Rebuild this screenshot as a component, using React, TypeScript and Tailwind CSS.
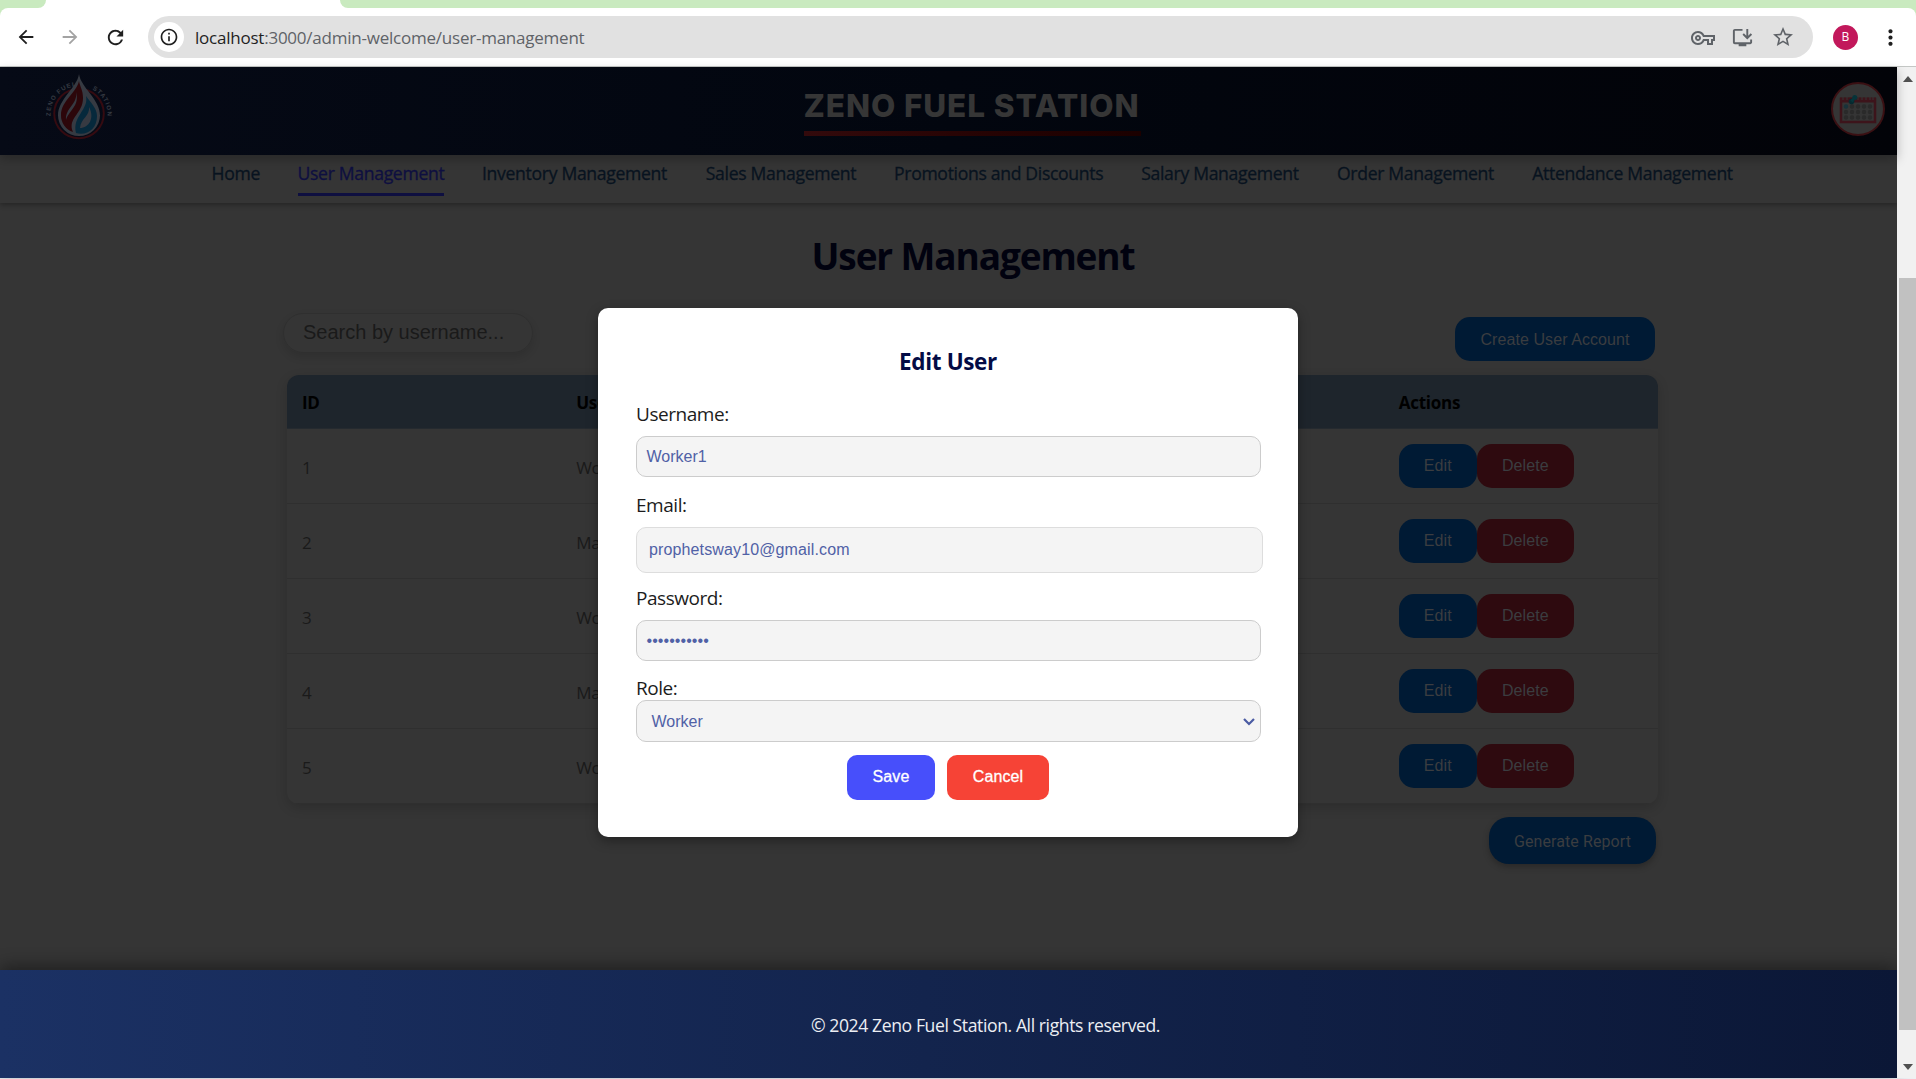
import type { ReactNode } from "react";
import {
  MdArrowBack,
  MdArrowForward,
  MdInfoOutline,
  MdInstallDesktop,
  MdMoreVert,
  MdOutlineVpnKey,
  MdRefresh,
  MdStarOutline,
} from "react-icons/md";

const navItems = [
  { label: "Home", width: "w-[48.5px]" },
  { label: "User Management", width: "w-[146px]", active: true },
  { label: "Inventory Management", width: "w-[187px]" },
  { label: "Sales Management", width: "w-[151px]" },
  { label: "Promotions and Discounts", width: "w-[209px]" },
  { label: "Salary Management", width: "w-[159px]" },
  { label: "Order Management", width: "w-[157px]" },
  { label: "Attendance Management", width: "w-[202px]" },
];

const users = [
  { id: 1, name: "Worker1" },
  { id: 2, name: "Manager1" },
  { id: 3, name: "Worker2" },
  { id: 4, name: "Manager2" },
  { id: 5, name: "Worker3" },
];

function BrowserBar() {
  return (
    <div className="h-[67px] shrink-0 bg-[#c9eabf]">
      <div className="flex h-2 bg-white">
        <div className="w-[46px] rounded-br-[12px] bg-[#c9eabf]" />
        <div className="flex-1" />
        <div className="w-[1576px] rounded-bl-[12px] bg-[#c9eabf]" />
      </div>
      <div className="flex h-[59px] items-start rounded-t-lg border-b border-[#c4c7c5] bg-white pt-2">
        <div className="flex h-[42px] w-[148px] items-center pl-[15px] text-[#1f1f1f]">
          <MdArrowBack className="size-[22px]" />
          <MdArrowForward className="ml-[22px] size-[22px] text-[#a3a3a3]" />
          <MdRefresh className="ml-[23px] size-[23px]" />
        </div>
        <div className="flex h-[42px] flex-1 items-center rounded-full bg-[#e1e1e1] pl-1.5 pr-[18px]">
          <div className="flex size-[30px] items-center justify-center rounded-full bg-white">
            <MdInfoOutline className="size-[20px] text-[#1f1f1f]" />
          </div>
          <div className="ml-[11px] flex-1 whitespace-nowrap pt-[1px] text-[17px] tracking-[-0.23px] text-[#5f6368]">
            <span className="text-[#1f1f1f]">localhost</span>:3000/admin-welcome/user-management
          </div>
          <div className="flex items-center gap-[17px] text-[#5f6368]">
            <MdOutlineVpnKey className="-mr-px mt-[1px] size-6" />
            <MdInstallDesktop className="size-[23px]" />
            <MdStarOutline className="size-[24px]" />
          </div>
        </div>
        <div className="flex h-[42px] w-[103px] items-center pl-5">
          <div className="flex size-[25px] items-center justify-center rounded-full bg-[#c2185b] text-[12px] text-white">
            B
          </div>
          <MdMoreVert className="ml-[20px] size-[25px] text-[#1f1f1f]" />
        </div>
      </div>
    </div>
  );
}

function FuelLogo() {
  return (
    <svg viewBox="0 0 72 72" className="size-[72px]">
      <defs>
        <path id="ring" d="M 8.5 50 A 28.5 28.5 0 1 1 63.5 50" />
      </defs>
      <circle cx="36" cy="41.5" r="24.8" fill="none" stroke="#350b11" strokeWidth="2" />
      <path d="M36 2C34 16 15 27 15 43.500a21 20.500 0 0 0 42 0C57 27 38 16 36 2Z" fill="#363a42" />
      <path d="M36 9C34 20 18 29 18 43a18 17.500 0 0 0 12 17c-6-14 10-18 10-34 0-8-3-11-4-17Z" fill="#2c060a" />
      <path d="M33 20c2 12-11 16-10 28 3-10 14-14 10-28Z" fill="#363a42" />
      <path d="M43 24c3 14-14 20-10 37 11 3 21-4 21-17 0-8-7-14-11-20Z" fill="#06293c" />
      <path d="M46 35c1 9-8 11-9 21 9 0 15-10 9-21Z" fill="#363a42" />
      <text fontSize="6.2" fill="#363a42" fontFamily="Liberation Sans" fontWeight="700" letterSpacing="1">
        <textPath href="#ring" startOffset="6">
          ZENO FUEL
        </textPath>
        <textPath href="#ring" startOffset="66">
          STATION
        </textPath>
      </text>
    </svg>
  );
}

function CalendarLogo() {
  return (
    <svg viewBox="0 0 54 54" className="size-[54px]">
      <circle cx="27" cy="27" r="26" fill="#353535" stroke="#3a1013" strokeWidth="2" />
      <rect x="10" y="17" width="34" height="23" fill="#353535" stroke="#3d141b" strokeWidth="2.500" />
      <rect x="9" y="15.500" width="36" height="5" fill="#3d141b" />
      <path d="M12 15v3M16 15v3M27 15v3M31 15v3M35 15v3M39 15v3M42 15v3" stroke="#353535" strokeWidth="1" />
      {[24.5, 30, 35.5].map((cy) =>
        [15, 21, 27, 33, 39].map((cx) => (
          <circle key={`${cx}-${cy}`} cx={cx} cy={cy} r="2.200" fill={cx === 15 && cy === 24.5 ? "#18323a" : "#2a2a2a"} />
        )),
      )}
      <circle cx="20.500" cy="19.500" r="2.800" fill="#062a30" />
      <circle cx="23.800" cy="15.500" r="2.500" fill="#06343a" />
      <path d="M20.500 19.500l3.300-4" stroke="#06343a" strokeWidth="3" />
    </svg>
  );
}

function SiteHeader() {
  return (
    <header className="relative z-10 flex h-[88px] shrink-0 items-start justify-between bg-linear-to-r from-[#060a16] via-[#02060f] to-[#020308] shadow-[0_4px_10px_rgba(0,0,0,0.25)]">
      <div className="ml-[43px] mt-[5px]">
        <FuelLogo />
      </div>
      <h1 className="ml-[-2px] mt-[18px] h-[50px] w-[337px] whitespace-nowrap font-['Inter'] text-[31.5px] font-extrabold leading-[41px] tracking-[0.9px] text-[#363636]">
        ZENO FUEL STATION
        <span className="mt-[5px] block h-[5px] bg-linear-to-r from-[#330a0c] to-[#1b0000]" />
      </h1>
      <div className="mr-3 mt-[15px]">
        <CalendarLogo />
      </div>
    </header>
  );
}

function NavBar() {
  return (
    <nav className="flex h-12 shrink-0 justify-center gap-[37.5px] pl-[48px] shadow-[0_2px_5px_rgba(0,0,0,0.3)]">
      {navItems.map((item) => (
        <a
          key={item.label}
          className={`${item.width} h-[41px] shrink-0 whitespace-nowrap pt-[6px] text-center text-[17.6px] font-medium leading-[24px] tracking-[-0.32px] [-webkit-text-stroke:0.3px_currentColor] ${
            item.active ? "border-b-[3px] border-[#0e0f40] text-[#0e0f40]" : "text-[#08131f]"
          }`}
        >
          {item.label}
        </a>
      ))}
    </nav>
  );
}

function DarkButton({ children, className }: { children: ReactNode; className: string }) {
  return (
    <button
      className={`flex h-11 items-center justify-center whitespace-nowrap rounded-[15px] pt-[1px] font-['Liberation_Sans'] text-[16px] tracking-[0.08px] text-[#3b3d40] ${className}`}
    >
      {children}
    </button>
  );
}

function UserTable() {
  return (
    <div className="h-[429px] w-[1371px] overflow-hidden rounded-[12px] shadow-[0_4px_12px_rgba(0,0,0,0.16)]">
      <div className="grid h-[54px] grid-cols-5 border-b border-[#252a2f] bg-[#1e252c] pt-[2px] text-[17px] font-bold leading-[52px] tracking-[-0.27px] text-black">
        {["ID", "Username", "", "", "Actions"].map((title, index) => (
          <div key={index} className="pl-[15px]">
            {title}
          </div>
        ))}
      </div>
      {users.map((user) => (
        <div
          key={user.id}
          className="grid h-[75px] grid-cols-5 items-center border-b border-[#2f2f2f] text-[17px] tracking-[-0.3px] text-[#1a1a1a]"
        >
          <div className="pl-[15px] pt-[3px]">{user.id}</div>
          <div className="pl-[15px] pt-[3px]">{user.name}</div>
          <div />
          <div />
          <div className="flex pb-[1px] pl-[15px]">
            <DarkButton className="w-[78px] bg-[#001a34]">Edit</DarkButton>
            <DarkButton className="w-[97px] bg-[#2e0a0f]">Delete</DarkButton>
          </div>
        </div>
      ))}
    </div>
  );
}

function FormLabel({ children, className }: { children: ReactNode; className: string }) {
  return (
    <div className={`flex items-center text-[19px] tracking-[-0.45px] text-[#1c1c1c] ${className}`}>{children}</div>
  );
}

function Field({ children, className }: { children: ReactNode; className: string }) {
  return (
    <div
      className={`flex items-center rounded-[10px] border bg-[#f4f4f4] font-['Liberation_Sans'] text-[16px] text-[#5061a6] ${className}`}
    >
      {children}
    </div>
  );
}

function EditUserDialog() {
  return (
    <div className="absolute left-[598px] top-[308px] z-20 h-[529px] w-[700px] rounded-[10px] bg-white pl-[38px] pr-[37px] pt-[39px] shadow-[0_4px_12px_rgba(0,0,0,0.35)]">
      <h3 className="h-[30px] pr-[1px] text-center text-[22.5px] font-bold leading-[30px] tracking-[-0.35px] text-[#030b45]">
        Edit User
      </h3>
      <FormLabel className="mt-[23px] h-[26px] pt-[2px]">Username:</FormLabel>
      <Field className="mt-[10px] h-[41px] border-[#ccc] pl-[9.5px]">Worker1</Field>
      <FormLabel className="mt-[15px] h-[26px]">Email:</FormLabel>
      <Field className="mr-[-2px] mt-[9px] h-[46px] border-[#ddd] pl-3 tracking-[0.13px]">prophetsway10@gmail.com</Field>
      <FormLabel className="mt-[12px] h-[26px]">Password:</FormLabel>
      <Field className="mt-[9px] h-[41px] border-[#ccc] pl-[9.5px] tracking-[0.07px]">•••••••••••</Field>
      <FormLabel className="mt-[15px] h-[24px]">Role:</FormLabel>
      <Field className="h-[42px] justify-between border-[#ccc] pl-[14.5px] pr-[5px] pt-[1px]">
        Worker
        <svg viewBox="0 0 12 8" className="mt-[1px] h-[8px] w-3">
          <path d="M1 1l5 5 5-5" fill="none" stroke="#4a5ba3" strokeWidth="2.200" />
        </svg>
      </Field>
      <div className="mt-[13px] flex justify-center gap-3 pr-[1px] font-['Liberation_Sans'] text-[16px] text-white [-webkit-text-stroke:0.3px_white]">
        <button className="h-[45px] w-[88px] rounded-[10px] bg-[#474ffb] pb-[2px] tracking-[0.1px]">Save</button>
        <button className="h-[45px] w-[102px] rounded-[10px] bg-[#f64336] pb-[2px] tracking-[0.1px]">Cancel</button>
      </div>
    </div>
  );
}

function ScrollBar() {
  return (
    <div className="flex w-[19px] shrink-0 flex-col items-center bg-[#f1f1f1]">
      <svg viewBox="0 0 10 6" className="ml-[2px] mt-[9px] h-[6px] w-[10px]">
        <path d="M0 6l5-6 5 6Z" fill="#505050" />
      </svg>
      <div className="ml-[2px] mt-[196px] h-[752px] w-[17px] bg-[#c1c1c1]" />
      <svg viewBox="0 0 10 6" className="ml-[2px] mt-[34px] h-[6px] w-[10px]">
        <path d="M0 0l5 6 5-6Z" fill="#505050" />
      </svg>
    </div>
  );
}

export default function App() {
  return (
    <div className="relative flex h-[1079px] w-[1916px] flex-col overflow-hidden bg-[#eef0f4] font-['Open_Sans',sans-serif]">
      <BrowserBar />
      <div className="flex h-[1011px]">
        <div className="flex w-[1897px] flex-col bg-[#353535]">
          <SiteHeader />
          <NavBar />
          <main className="flex h-[767px] shrink-0 flex-col">
            <h2 className="mt-[28px] h-[50px] pl-[49px] text-center text-[37px] font-bold leading-[49px] tracking-[-1.13px] text-[#01020f]">
              User Management
            </h2>
            <div className="ml-[283px] mt-[32px] flex h-[62px] w-[1372px] justify-between">
              <div className="h-[40px] w-[250px] rounded-full border border-[#2f2f2f] pl-[19px] font-['Liberation_Sans'] text-[20px] leading-[37px] text-[#1a1a1a] shadow-[0_4px_8px_rgba(0,0,0,0.12)]">
                Search by username...
              </div>
              <DarkButton className="mt-1 w-[200px] bg-[#001a34]">Create User Account</DarkButton>
            </div>
            <div className="ml-[287px]">
              <UserTable />
            </div>
            <button className="ml-[1489px] mt-[13px] h-[47px] w-[167px] rounded-[20px] bg-[#001a34] pt-[2px] font-['Roboto'] text-[16px] font-normal tracking-[0.08px] text-[#3b3d40] shadow-[0_3px_6px_rgba(0,0,0,0.25)]">
              Generate Report
            </button>
          </main>
          <footer className="flex flex-1 items-center justify-center bg-linear-to-r from-[#1b3164] to-[#0b1736] pl-[74px] pt-[3px] text-[17.6px] tracking-[-0.41px] text-[#eceef3] shadow-[0_-4px_16px_rgba(0,0,0,0.4)]">
            © 2024 Zeno Fuel Station. All rights reserved.
          </footer>
        </div>
        <ScrollBar />
      </div>
      <EditUserDialog />
    </div>
  );
}
